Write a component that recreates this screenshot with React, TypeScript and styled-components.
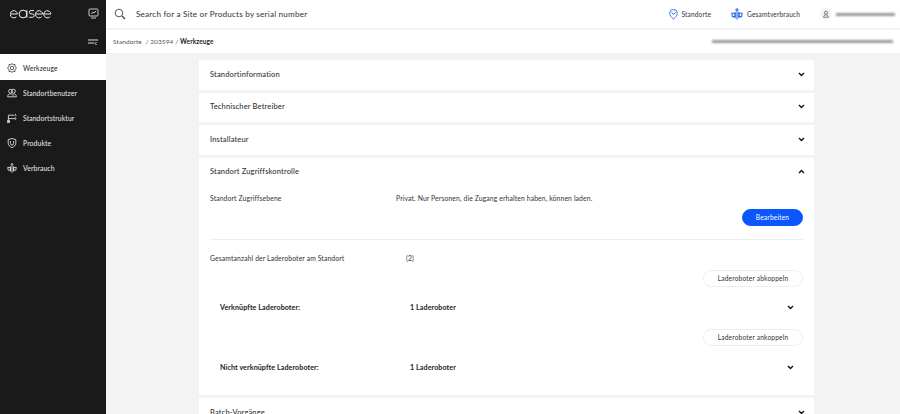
import { ReactNode } from "react";
import styled, { createGlobalStyle } from "styled-components";

const GlobalStyle = createGlobalStyle`
  html, body {
    margin: 0;
    padding: 0;
    height: 414px;
    overflow: hidden;
    background: #f3f3f3;
    font-family: "Lato", "Liberation Sans", sans-serif;
    color: #222;
  }
  * { box-sizing: border-box; }
`;

const Page = styled.div`
  display: grid;
  grid-template-columns: 106px 1fr;
  height: 414px;
  overflow: hidden;
`;

const Sidebar = styled.aside`
  display: flex;
  flex-direction: column;
  background: #1a1a1a;
`;

const SideHead = styled.div`
  height: 55px;
  padding: 8px 7px 0 10px;
  display: flex;
  flex-direction: column;
  border-bottom: 1px solid #fff;
`;

const LogoRow = styled.div`
  display: flex;
  justify-content: space-between;
  align-items: center;
  height: 11px;
`;

const CollapseRow = styled.div`
  display: flex;
  justify-content: flex-end;
  margin-top: 20px;
  padding-right: 1px;
`;

const NavList = styled.nav`
  display: flex;
  flex-direction: column;
`;

const NavItem = styled.div<{ $active?: boolean }>`
  display: flex;
  align-items: center;
  gap: 6px;
  height: 25px;
  padding-left: 7px;
  font-size: 6.8px;
  font-weight: 500;
  letter-spacing: 0.1px;
  background: ${(p) => (p.$active ? "#fff" : "transparent")};
  color: ${(p) => (p.$active ? "#333" : "#e0e0e0")};
  svg { flex: none; }
`;

const Right = styled.div`
  display: flex;
  flex-direction: column;
  min-width: 0;
`;

const TopBar = styled.header`
  height: 28px;
  background: #fff;
  display: flex;
  align-items: center;
  padding: 0 5px 0 8px;
  margin-bottom: 2px;
`;

const SearchText = styled.span`
  font-size: 8.2px;
  font-weight: 400;
  letter-spacing: 0.18px;
  color: #333;
  margin-left: 10px;
`;

const TopLink = styled.span`
  display: flex;
  align-items: center;
  gap: 4px;
  font-size: 6.6px;
  letter-spacing: 0.12px;
  color: #333;
`;

const TopLinks = styled.div`
  margin-left: auto;
  display: flex;
  align-items: center;
  gap: 20px;
`;

const UserBadge = styled.span`
  display: flex;
  align-items: center;
  justify-content: center;
  width: 12px;
  height: 12px;
  border-radius: 50%;
  background: #f3f3f3;
`;

const Blurred = styled.span<{ $w: number }>`
  display: block;
  width: ${(p) => p.$w}px;
  height: 3px;
  background: #999;
  filter: blur(1px);
`;

const Crumbs = styled.div`
  height: 23px;
  background: #fff;
  display: flex;
  align-items: center;
  justify-content: space-between;
  padding: 0 7px 0 7px;
  font-size: 6.5px;
  letter-spacing: 0.1px;
  color: #555;
  b { color: #222; font-weight: 700; }
`;

const Main = styled.main`
  flex: 1;
  overflow: hidden;
  padding: 7px 86px 0 93px;
  display: flex;
  flex-direction: column;
  gap: 3px;
`;

const Card = styled.section`
  background: #fff;
  flex: none;
`;

const CardHead = styled.div`
  height: 29.5px;
  display: flex;
  align-items: center;
  justify-content: space-between;
  padding: 0 9px 0.6px 11px;
  font-size: 7.5px;
  font-weight: 500;
  letter-spacing: 0.15px;
  color: #333;
`;

const CardBody = styled.div`
  padding: 5.5px 11px 0 11px;
  height: 208px;
  display: flex;
  flex-direction: column;
`;

const InfoRow = styled.div<{ $col: number }>`
  display: grid;
  grid-template-columns: ${(p) => p.$col}px 1fr;
  font-size: 6.8px;
  letter-spacing: 0.12px;
  color: #333;
  height: 10px;
  align-items: center;
`;

const ActionRow = styled.div<{ $top: number }>`
  display: flex;
  justify-content: flex-end;
  margin-top: ${(p) => p.$top}px;
`;

const Divider = styled.hr`
  border: 0;
  border-top: 1px solid #eee;
  margin: 13px 0;
  width: 100%;
`;

const Pill = styled.button<{ $primary?: boolean }>`
  width: ${(p) => (p.$primary ? 61 : 100)}px;
  height: 17px;
  border-radius: 9px;
  border: 1px solid ${(p) => (p.$primary ? "#0a56ff" : "#eeeeee")};
  background: ${(p) => (p.$primary ? "#0a56ff" : "#fff")};
  color: ${(p) => (p.$primary ? "#fff" : "#333")};
  font-family: inherit;
  font-size: 6.6px;
  font-weight: 400;
  letter-spacing: 0.17px;
  padding: 0;
`;

const SubRow = styled.div<{ $top: number }>`
  display: grid;
  grid-template-columns: 190px 1fr auto;
  align-items: center;
  margin-top: ${(p) => p.$top}px;
  padding: 0 9px 0 10px;
  font-size: 7.1px;
  font-weight: 700;
  letter-spacing: 0.1px;
  color: #222;
  height: 12px;
`;

function Chevron({ up }: { up?: boolean }) {
  return (
    <svg width="7" height="5" viewBox="0 0 7 5" fill="none">
      <path
        d={up ? "M1 4 3.5 1.5 6 4" : "M1 1 3.5 3.5 6 1"}
        stroke="#111"
        strokeWidth="1.4"
      />
    </svg>
  );
}

function Logo() {
  return (
    <svg width="42" height="10" viewBox="0 0 42 10" fill="none" stroke="#eee" strokeWidth="1">
      <path d="M1 5h6.4a3.6 3.6 0 1 0-1 2.8" />
      <circle cx="13" cy="5" r="3.9" />
      <path d="M16.9 1.2v7.6" />
      <path d="M24 1.6h-3a1.6 1.6 0 0 0 0 3.3h1.4a1.6 1.6 0 0 1 0 3.4h-3.2" />
      <path d="M26 5h6.6a3.6 3.6 0 1 0-1 2.8" />
      <path d="M34 5h6.9a3.6 3.6 0 1 0-1 2.8" />
    </svg>
  );
}

type IconProps = { c?: string; size?: number };

function GearIcon({ c = "#444" }: IconProps) {
  return (
    <svg width="10" height="10" viewBox="0 0 10 10" fill="none" stroke={c} strokeWidth="0.9">
      <circle cx="5" cy="5" r="1.7" />
      <path d="M5 .6 6.2 1.6 7.9 1.5 8 3.2 9.4 5 8 6.8 7.9 8.5 6.2 8.4 5 9.4 3.8 8.4 2.1 8.5 2 6.8.6 5 2 3.2 2.1 1.5 3.8 1.6Z" />
    </svg>
  );
}

function UsersIcon({ c = "#ddd" }: IconProps) {
  return (
    <svg width="10" height="10" viewBox="0 0 10 10" fill="none" stroke={c} strokeWidth="0.9">
      <circle cx="3.5" cy="3.2" r="1.9" />
      <circle cx="6.5" cy="3.2" r="1.9" />
      <path d="M.6 8.8c0-2 1.2-3 2.9-3s2.9 1 2.9 3zM6.4 5.8c1.8 0 3 1 3 3H6.6" />
    </svg>
  );
}

function TreeIcon({ c = "#ddd" }: IconProps) {
  return (
    <svg width="10" height="10" viewBox="0 0 10 10" fill="none" stroke={c} strokeWidth="0.9">
      <path d="M1.4 7.5V2.2h6M8 1 9.2 2.2 8 3.4M1.4 5.6h7M8 4.5 9.2 5.6 8 6.8" />
      <rect x="0.6" y="7.6" width="1.8" height="1.8" />
    </svg>
  );
}

function ShieldIcon({ c = "#ddd" }: IconProps) {
  return (
    <svg width="10" height="10" viewBox="0 0 10 10" fill="none" stroke={c} strokeWidth="0.9">
      <path d="M5 .5 8.8 1.6V5.2C8.8 7.4 7 8.8 5 9.6 3 8.8 1.2 7.4 1.2 5.2V1.6Z" />
      <path d="M3.4 3v2.4a1.6 1.6 0 0 0 3.2 0V3" />
    </svg>
  );
}

function UsageIcon({ c = "#ddd", size = 10 }: IconProps) {
  return (
    <svg width={size} height={size} viewBox="0 0 10 10" fill="none" stroke={c} strokeWidth="0.9">
      <circle cx="5" cy="1.5" r="0.9" />
      <path d="M5 3v6.6M3.4 3.4v5.2M6.6 3.4v5.2" />
      <path d="M.7 4.4h2.7v2.8H1.2ZM9.3 4.4H6.6v2.8h2.2Z" />
    </svg>
  );
}

function PinIcon() {
  return (
    <svg width="9" height="11" viewBox="0 0 9 11" fill="none" stroke="#2a66ee" strokeWidth="0.9">
      <path d="M4.5 10.2C2 8 .7 6.2.7 4.2a3.8 3.8 0 0 1 7.6 0c0 2-1.3 3.8-3.8 6Z" />
      <path d="M2.6 3.4 4.5 5.6 6.4 3.4" />
    </svg>
  );
}

function NavEntry({ icon, label, active }: { icon: ReactNode; label: string; active?: boolean }) {
  return (
    <NavItem $active={active}>
      {icon}
      {label}
    </NavItem>
  );
}

function Section({ title }: { title: string }) {
  return (
    <Card>
      <CardHead>
        {title}
        <Chevron />
      </CardHead>
    </Card>
  );
}

export default function App() {
  return (
    <>
      <GlobalStyle />
      <Page>
        <Sidebar>
          <SideHead>
            <LogoRow>
              <Logo />
              <svg width="11" height="11" viewBox="0 0 11 11" fill="none" stroke="#ddd" strokeWidth="0.9">
                <rect x="1" y="1" width="9" height="7" rx="1" />
                <path d="M3 10h5M3.5 6 5 4 6.2 5 8 3" />
              </svg>
            </LogoRow>
            <CollapseRow>
              <svg width="10" height="7" viewBox="0 0 10 7" fill="none" stroke="#ddd" strokeWidth="1">
                <path d="M0 1h10M0 4h6M8.5 3 7 4.5 8.5 6" />
              </svg>
            </CollapseRow>
          </SideHead>
          <NavList>
            <NavEntry active icon={<GearIcon />} label="Werkzeuge" />
            <NavEntry icon={<UsersIcon />} label="Standortbenutzer" />
            <NavEntry icon={<TreeIcon />} label="Standortstruktur" />
            <NavEntry icon={<ShieldIcon />} label="Produkte" />
            <NavEntry icon={<UsageIcon />} label="Verbrauch" />
          </NavList>
        </Sidebar>
        <Right>
          <TopBar>
            <svg width="12" height="12" viewBox="0 0 12 12" fill="none" stroke="#444" strokeWidth="0.9">
              <circle cx="5" cy="5" r="3.8" />
              <path d="M8 8 11 11" strokeWidth="1.3" />
            </svg>
            <SearchText>Search for a Site or Products by serial number</SearchText>
            <TopLinks>
              <TopLink>
                <PinIcon />
                Standorte
              </TopLink>
              <TopLink>
                <UsageIcon c="#2a66ee" size={12} />
                Gesamtverbrauch
              </TopLink>
              <TopLink>
                <UserBadge>
                  <svg width="8" height="8" viewBox="0 0 10 10" fill="none" stroke="#555" strokeWidth="0.9">
                    <circle cx="5" cy="3.4" r="2" />
                    <path d="M2 9c0-2 1.2-3 3-3s3 1 3 3z" />
                  </svg>
                </UserBadge>
                <Blurred $w={59} />
              </TopLink>
            </TopLinks>
          </TopBar>
          <Crumbs>
            <span>
              Standorte&nbsp; / 203594 / <b>Werkzeuge</b>
            </span>
            <Blurred $w={181} />
          </Crumbs>
          <Main>
            <Section title="Standortinformation" />
            <Section title="Technischer Betreiber" />
            <Section title="Installateur" />
            <Card>
              <CardHead>
                Standort Zugriffskontrolle
                <Chevron up />
              </CardHead>
              <CardBody>
                <InfoRow $col={186}>
                  <span>Standort Zugriffsebene</span>
                  <span>Privat. Nur Personen, die Zugang erhalten haben, können laden.</span>
                </InfoRow>
                <ActionRow $top={6}>
                  <Pill $primary>Bearbeiten</Pill>
                </ActionRow>
                <Divider />
                <InfoRow $col={196}>
                  <span>Gesamtanzahl der Laderoboter am Standort</span>
                  <span>(2)</span>
                </InfoRow>
                <ActionRow $top={7}>
                  <Pill>Laderoboter abkoppeln</Pill>
                </ActionRow>
                <SubRow $top={15}>
                  <span>Verknüpfte Laderoboter:</span>
                  <span>1 Laderoboter</span>
                  <Chevron />
                </SubRow>
                <ActionRow $top={15}>
                  <Pill>Laderoboter ankoppeln</Pill>
                </ActionRow>
                <SubRow $top={16}>
                  <span>Nicht verknüpfte Laderoboter:</span>
                  <span>1 Laderoboter</span>
                  <Chevron />
                </SubRow>
              </CardBody>
            </Card>
            <Section title="Batch-Vorgänge" />
          </Main>
        </Right>
      </Page>
    </>
  );
}
